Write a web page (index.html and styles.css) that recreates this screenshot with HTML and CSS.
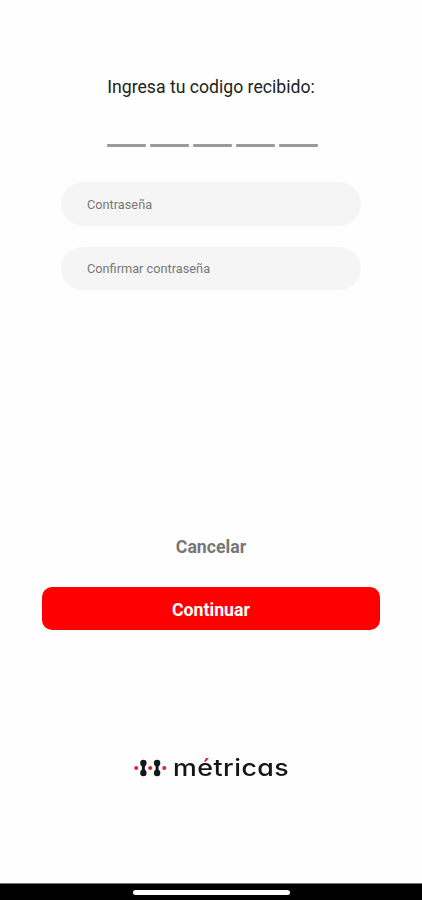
FILE: index.html
```html
<!DOCTYPE html>
<html lang="es">
<head>
<meta charset="utf-8">
<meta name="viewport" content="width=device-width, initial-scale=1">
<title>Métricas</title>
<link rel="stylesheet" href="styles.css">
</head>
<body>
<main class="screen">
  <h1 class="title">Ingresa tu codigo recibido:</h1>
  <div class="code"><span class="digit"></span><span class="digit"></span><span class="digit"></span><span class="digit"></span><span class="digit"></span></div>
  <form class="fields">
    <div class="field">Contraseña</div>
    <div class="field field-confirm">Confirmar contraseña</div>
  </form>
  <div class="actions">
    <div class="cancel">Cancelar</div>
    <div class="continue">Continuar</div>
  </div>
  <div class="brand">
    <svg class="mark" width="34" height="20" viewBox="0 0 34 20" aria-hidden="true">
      <g fill="#101820">
        <circle cx="10.4" cy="5" r="3.2"/><circle cx="10.4" cy="15" r="3.2"/>
        <path d="M8.4 6h4q-1.2 4 0 8h-4q1.2-4 0-8z"/>
        <circle cx="24.1" cy="5" r="3.2"/><circle cx="24.1" cy="15" r="3.2"/>
        <path d="M22.1 6h4q-1.2 4 0 8h-4q1.2-4 0-8z"/>
      </g>
      <g fill="#e5252b"><circle cx="3.2" cy="10" r="2.1"/><circle cx="17.2" cy="10" r="2.1"/><circle cx="31.3" cy="10" r="2.1"/></g>
    </svg>
    <span class="wordmark">m<span class="accent">é</span>tricas</span>
  </div>
  <div class="navbar"><span class="handle"></span></div>
</main>
</body>
</html>
```
FILE: styles.css
```css
* { box-sizing: border-box; }
body { margin: 0; background: #fefefe; font-family: Roboto, "Liberation Sans", sans-serif; }
.screen { height: 900px; display: flex; flex-direction: column; align-items: center; overflow: hidden; }
.title { margin: 75px 0 0; font-size: 17.65px; line-height: 24px; font-weight: 400; color: #222; white-space: nowrap; }
.code { display: flex; gap: 4px; margin: 45px 0 0 2px; }
.digit { width: 39px; height: 3px; background: #9a9a9a; border-radius: 1px; }
.fields { margin-top: 35px; width: 300px; display: flex; flex-direction: column; gap: 21px; }
.field { height: 44px; border-radius: 22px; background: #f5f5f5; padding-left: 26px; line-height: 45px; font-size: 12.75px; color: #777; }
.field-confirm { height: 43px; line-height: 43px; }
.actions { margin-top: 244px; width: 338px; text-align: center; font-weight: 700; font-size: 17.7px; }
.cancel { height: 26px; line-height: 26px; color: #777; }
.continue { margin-top: 27px; height: 43px; line-height: 46px; border-radius: 10px; background: #fe0000; color: #fff; }
.brand { margin-top: 122px; height: 32px; width: 156px; display: flex; align-items: center; gap: 6px; }
.mark { flex: none; }
.wordmark { font-family: Inter, Lato, sans-serif; font-size: 23.5px; line-height: 32px; font-weight: 550; letter-spacing: .4px; color: #151515; font-feature-settings: "cv11"; transform: scaleX(1.14); transform-origin: left; }
.accent { color: transparent; background: linear-gradient(#e5252b 0 8px, #151515 8px); background-clip: text; -webkit-background-clip: text; }
.navbar { margin-top: auto; width: 100%; height: 17px; background: #000; border-top: 1px solid #777; display: flex; justify-content: center; padding-top: 6px; }
.handle { width: 157px; height: 5px; border-radius: 3px; background: #fff; }
```
